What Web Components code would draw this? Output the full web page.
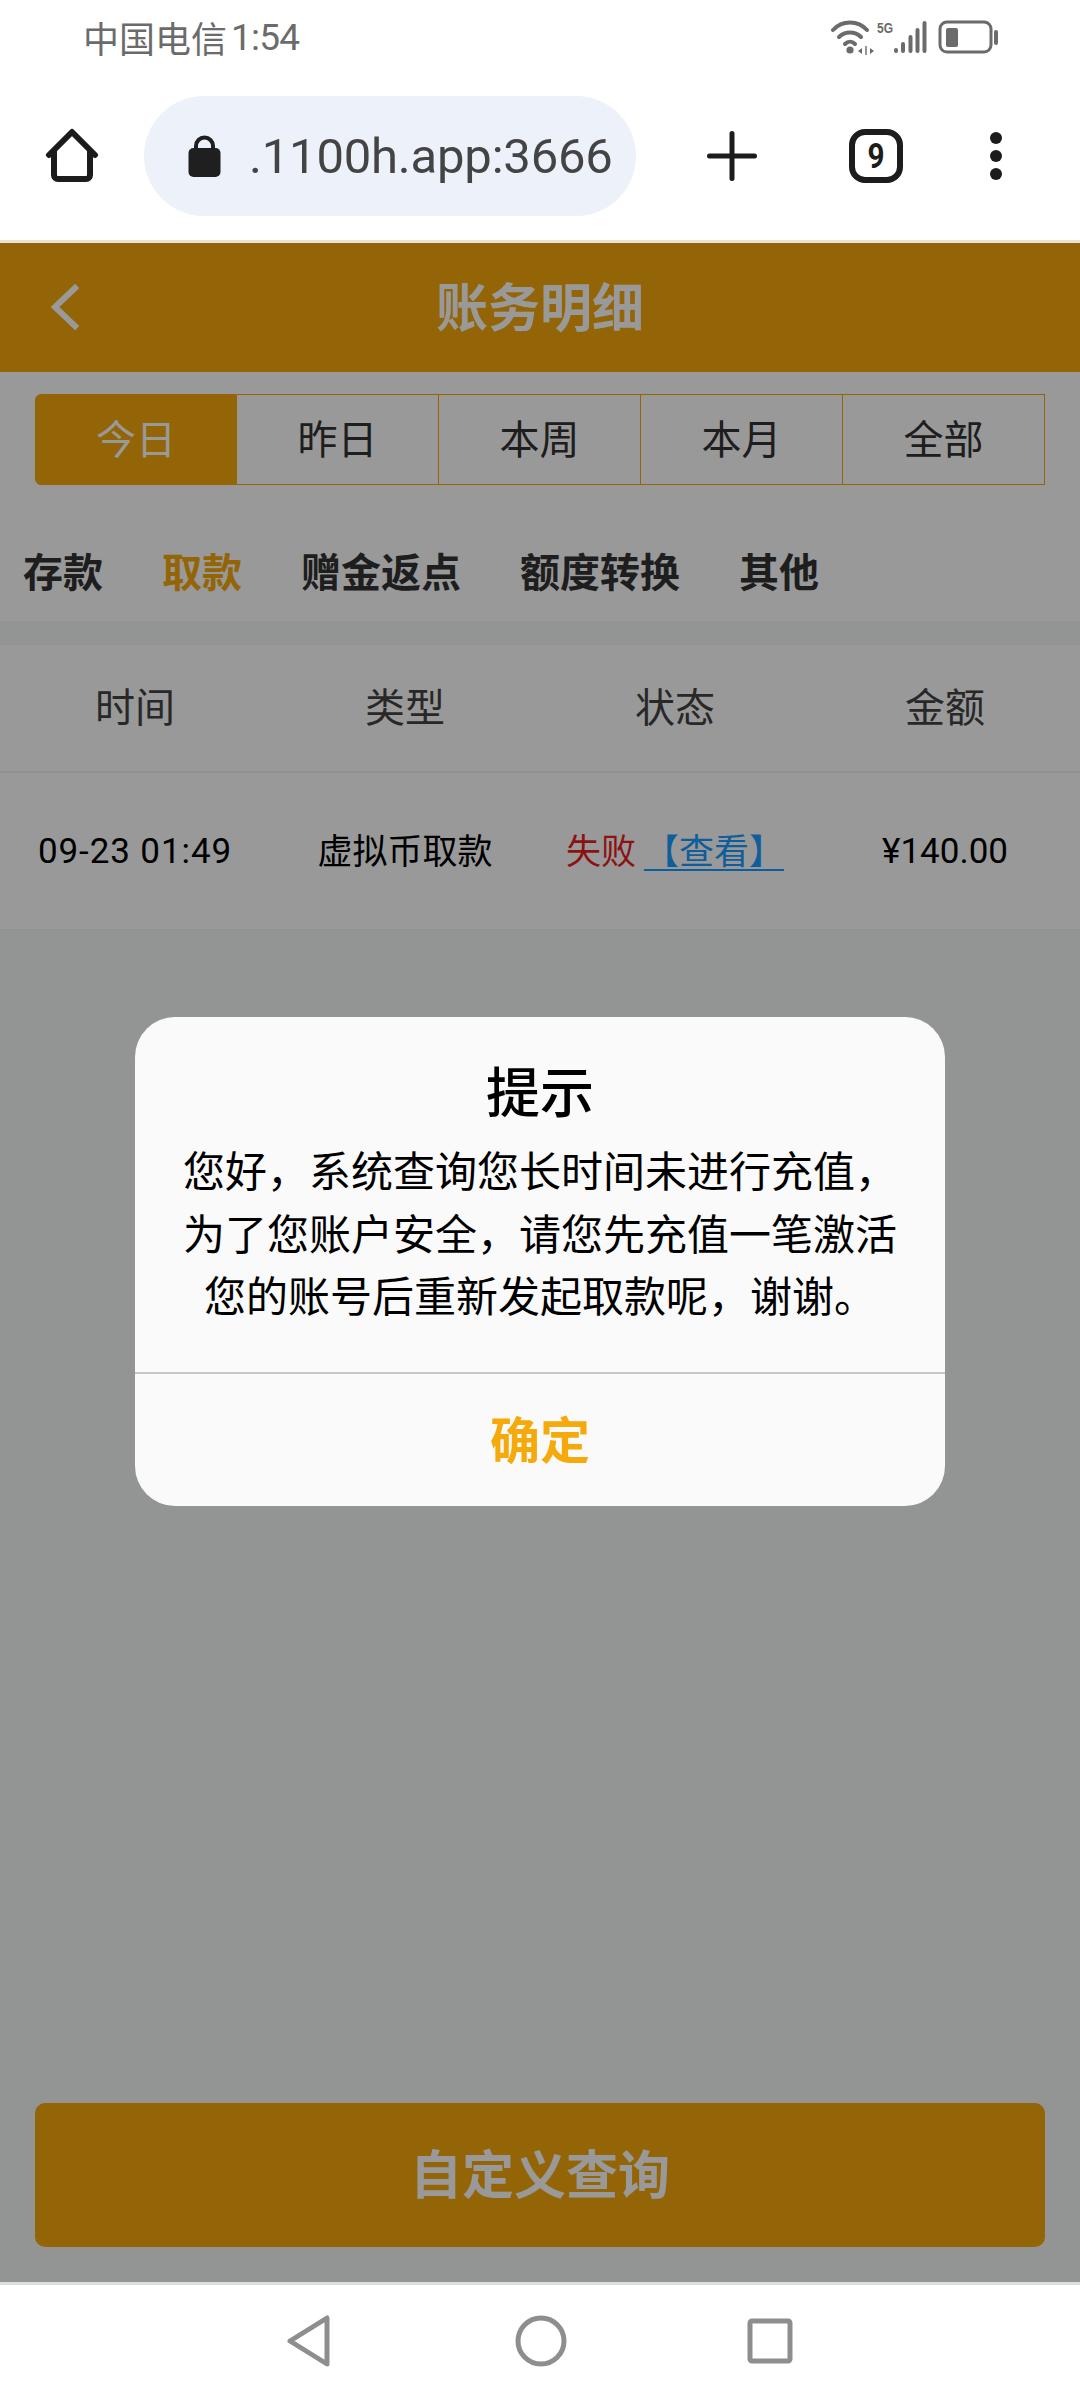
<!DOCTYPE html>
<html lang="zh-CN">
<head>
<meta charset="utf-8">
<style>
html,body{margin:0;padding:0;background:#fff}
body{width:1080px;height:2400px;display:flex;flex-direction:column;overflow:hidden;font-family:"Noto Sans CJK SC","Noto Sans",sans-serif}
</style>
</head>
<body>
<status-bar></status-bar>
<browser-bar></browser-bar>
<app-page>
  <app-header>账务明细</app-header>
  <range-tabs></range-tabs>
  <type-nav></type-nav>
  <record-table></record-table>
  <query-button>自定义查询</query-button>
  <alert-dialog title-text="提示" action="确定">您好，系统查询您长时间未进行充值，为了您账户安全，请您先充值一笔激活您的账号后重新发起取款呢，谢谢。</alert-dialog>
</app-page>
<nav-bar></nav-bar>
<script>
function def(name, html, init){
  customElements.define(name, class extends HTMLElement{
    constructor(){super();this.attachShadow({mode:'open'}).innerHTML=html;}
    connectedCallback(){if(init)init(this);}
  });
}
const CJK='"Noto Sans CJK SC","Noto Sans",sans-serif';

def('status-bar',`<style>
:host{display:flex;flex:none;height:78px;box-sizing:border-box;padding:0 82px 2px 83px;align-items:center;justify-content:space-between;background:#fff;color:#6b6b6b}
.t{font:400 36px/1 ${CJK};word-spacing:-7px;display:flex;align-items:center;margin-bottom:2px}
.t span{font-family:Roboto,sans-serif;font-size:37px;letter-spacing:-.8px;margin-left:4px}
svg{display:block}
</style>
<div class="t">中国电信 <span>1:54</span></div>
<svg width="167" height="36" viewBox="0 0 167 36" fill="none" aria-hidden="true">
 <g stroke="#6b6b6b" stroke-width="4" stroke-linecap="round">
  <path d="M2 10C11 0 27 0 36 10"/><path d="M8 17C14 11 24 11 30 17"/><path d="M14 24C17 21 21 21 24 24"/>
 </g>
 <circle cx="19" cy="30" r="3.6" fill="#6b6b6b"/>
 <path d="M31 28l-4 3 4 3zM34.300 26v9h1.400v-9zM39 28l4 3-4 3z" fill="#6b6b6b"/>
 <text x="46" y="13" font-family="Liberation Sans, sans-serif" font-weight="700" font-size="15" fill="#6b6b6b" textLength="16" lengthAdjust="spacingAndGlyphs">5G</text>
 <g stroke="#6b6b6b" stroke-width="4" stroke-linecap="round">
  <path d="M65 30v1M72 24v7M79.500 17v14M86.500 10v21M93.500 3v28"/>
 </g>
 <rect x="109" y="2" width="51" height="30" rx="7" stroke="#6b6b6b" stroke-width="3"/>
 <rect x="115" y="8" width="12" height="19" rx="2" fill="#6b6b6b"/>
 <rect x="163" y="10" width="4" height="15" rx="2" fill="#6b6b6b"/>
</svg>`);

def('browser-bar',`<style>
:host{display:flex;flex:none;height:165px;box-sizing:border-box;align-items:center;background:#fff;border-bottom:3px solid #e6e4d2;padding:0 0 6px 45px}
.pill{margin-left:45px;width:492px;height:120px;border-radius:60px;background:#edf1fa;display:flex;align-items:center;box-sizing:border-box;padding-left:44px;color:#444;font:400 49px/1 Roboto,sans-serif;letter-spacing:-.2px;overflow:hidden}
.pill svg{margin-right:28px;flex:none}
.acts{display:flex;align-items:center;margin-left:71px}
svg{display:block;flex:none}
.tab{margin-left:92px;width:54px;height:54px;box-sizing:border-box;border:6px solid #1c1c1c;border-radius:16px;display:flex;align-items:center;justify-content:center;font:700 35px/1 Roboto,sans-serif;color:#1c1c1c}
.tab span{display:block;transform:scaleX(.85)}
</style>
<svg width="54" height="56" viewBox="0 0 54 56" fill="none" aria-hidden="true"><path d="M4 27L27 4l23 23M9 23v24a4 4 0 0 0 4 4h28a4 4 0 0 0 4-4V23" stroke="#1c1c1c" stroke-width="6" stroke-linecap="round" stroke-linejoin="round"/></svg>
<div class="pill">
 <svg width="33" height="42" viewBox="0 0 33 42" aria-hidden="true"><path d="M8 17V11a8.500 8.500 0 0 1 17 0v6" fill="none" stroke="#1f1f1f" stroke-width="4"/><rect x="0.500" y="13" width="32" height="29" rx="5" fill="#1f1f1f"/></svg>
 <span>.1100h.app:3666</span>
</div>
<div class="acts">
 <svg width="50" height="50" viewBox="0 0 50 50" aria-hidden="true"><path d="M25 2.500v45M2.500 25h45" stroke="#1c1c1c" stroke-width="5" stroke-linecap="round"/></svg>
 <div class="tab"><span>9</span></div>
 <svg style="margin-left:86px" width="14" height="50" viewBox="0 0 14 50" aria-hidden="true"><g fill="#1c1c1c"><circle cx="7" cy="7" r="6"/><circle cx="7" cy="25" r="6"/><circle cx="7" cy="43" r="6"/></g></svg>
</div>`);

def('app-page',`<style>
:host{display:flex;flex-direction:column;flex:1;min-height:0;position:relative;background:#f5f8f7;overflow:hidden}
</style><slot></slot>`);

def('app-header',`<style>
:host{display:flex;flex:none;height:129px;box-sizing:border-box;padding-bottom:6px;align-items:center;justify-content:center;background:#f5a90b;color:#fff;font:700 52px/1 ${CJK};position:relative}
svg{position:absolute;left:48px;top:40px}
</style>
<svg width="32" height="48" viewBox="0 0 32 48" fill="none" aria-hidden="true"><path d="M27 5L7 24l20 19" stroke="#fff" stroke-width="6" stroke-linecap="square"/></svg><slot></slot>`);

def('range-tabs',`<style>
:host{display:grid;flex:none;grid-template-columns:repeat(5,1fr);background:#fff;padding:22px 35px 0;height:113px;box-sizing:border-box}
div{display:flex;align-items:center;justify-content:center;height:91px;box-sizing:border-box;padding-bottom:6px;border:solid #f5a90b;border-width:1.500px 1.500px 1.500px 0;color:#333;font:400 40px/1 ${CJK}}
div:first-of-type{background:#f5a90b;color:#fff;border-left-width:1.500px;border-radius:6px 0 0 6px}
</style>
<div>今日</div><div>昨日</div><div>本周</div><div>本月</div><div>全部</div>`);

def('type-nav',`<style>
:host{display:flex;flex:none;gap:59px;height:136px;box-sizing:border-box;padding:34px 0 0 23px;align-items:center;background:#fff;color:#333;font:700 40px/1 ${CJK}}
.on{color:#f5a90b}
</style>
<span>存款</span><span class="on">取款</span><span>赠金返点</span><span>额度转换</span><span>其他</span>`);

def('record-table',`<style>
:host{display:block;flex:none;margin-top:24px;background:#fff}
.r{display:grid;grid-template-columns:repeat(4,1fr);align-items:center;text-align:center}
.h{height:128px;padding-bottom:6px;color:#444;font:400 40px/1 ${CJK};border-bottom:2px solid #f3f3f3;box-sizing:border-box}
.b{height:158px;color:#000;font:400 35px/1 ${CJK};border-bottom:2px solid #f3f3f3;box-sizing:border-box}
.c{padding-bottom:6px}
.n{font-family:Roboto,"Noto Sans",sans-serif;font-size:35px}
.d{letter-spacing:.9px}
.bad{color:#e81f1f}
a{color:#1a9cff;text-decoration:underline;text-underline-offset:5px;text-decoration-thickness:2px}
</style>
<div class="r h"><span>时间</span><span>类型</span><span>状态</span><span>金额</span></div>
<div class="r b"><span class="n d">09-23 01:49</span><span class="c">虚拟币取款</span><span class="c"><span class="bad">失败</span> <a>【查看】</a></span><span class="n">¥140.00</span></div>`);

def('query-button',`<style>
:host{display:flex;flex:none;margin:auto 35px 35px;height:144px;box-sizing:border-box;padding-bottom:6px;border-radius:10px;align-items:center;justify-content:center;background:#f5a90b;color:#fff;font:700 52px/1 ${CJK}}
</style><slot></slot>`);

def('alert-dialog',`<style>
:host{position:absolute;inset:0;display:block;background:rgba(0,0,0,.4)}
.d{position:absolute;left:135px;top:774px;width:810px;height:489px;border-radius:40px;background:#fafafa;display:flex;flex-direction:column;color:#000}
.t{font:500 54px/1 ${CJK};text-align:center;margin-top:46px}
.c{font:400 42px/62.500px ${CJK};text-align:center;padding:0 45px;margin-top:21px;flex:1}
.a{height:132px;box-sizing:content-box;padding-bottom:0;border-top:2px solid #c8c8c8;display:flex;align-items:center;justify-content:center;color:#f5a90b;font:700 50px/1 ${CJK}}
.a span{display:block;margin-bottom:6px}
</style>
<div class="d"><div class="t"></div><div class="c"><slot></slot></div><div class="a"><span></span></div></div>`,
el=>{el.shadowRoot.querySelector('.t').textContent=el.getAttribute('title-text');el.shadowRoot.querySelector('.a span').textContent=el.getAttribute('action');});

def('nav-bar',`<style>
:host{display:flex;flex:none;height:118px;box-sizing:border-box;border-top:3px solid #dedede;background:#fff;align-items:center;justify-content:center;padding:0 2px 4px 0}
svg{display:block}
</style>
<svg width="46" height="54" viewBox="0 0 46 54" fill="none" aria-hidden="true"><path d="M41 4v46L4 27z" stroke="#8e8e8e" stroke-width="5" stroke-linejoin="round"/></svg>
<svg style="margin-left:183px" width="52" height="52" viewBox="0 0 52 52" fill="none" aria-hidden="true"><circle cx="26" cy="26" r="23" stroke="#8e8e8e" stroke-width="5"/></svg>
<svg style="margin-left:180px" width="46" height="46" viewBox="0 0 46 46" fill="none" aria-hidden="true"><rect x="3" y="3" width="40" height="40" rx="2" stroke="#8e8e8e" stroke-width="5"/></svg>`);
</script>
</body>
</html>
